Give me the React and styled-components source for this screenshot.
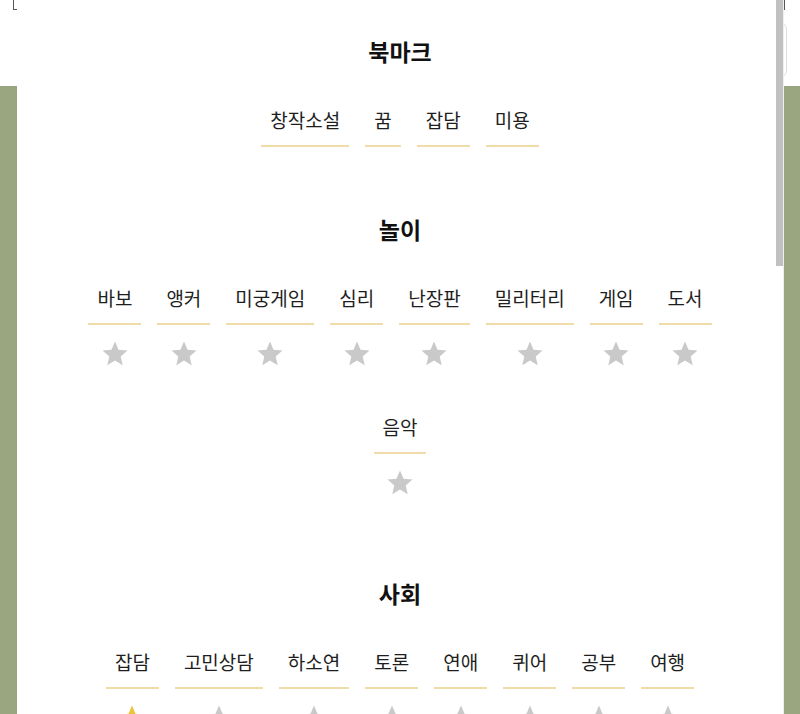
import React from 'react';
import styled, { createGlobalStyle } from 'styled-components';

const GlobalStyle = createGlobalStyle`
  html, body { margin: 0; padding: 0; }
  body {
    background: #9aa67f;
    font-family: "Noto Sans CJK KR", "Noto Sans", sans-serif;
    height: 714px;
    overflow: hidden;
  }
`;

const sections = [
  {
    title: '북마크',
    stars: false,
    tags: ['창작소설', '꿈', '잡담', '미용'],
  },
  {
    title: '놀이',
    stars: true,
    tags: ['바보', '앵커', '미궁게임', '심리', '난장판', '밀리터리', '게임', '도서', '음악'],
  },
  {
    title: '사회',
    stars: true,
    active: '잡담',
    tags: ['잡담', '고민상담', '하소연', '토론', '연애', '퀴어', '공부', '여행'],
  },
  {
    title: '창작',
    stars: true,
    tags: ['창작소설', '그림', '릴레이', '설정', '시', '음악'],
  },
];

export default function App() {
  return (
    <>
      <GlobalStyle />
      <Header>
        <TopBar />
        <SearchBox />
      </Header>
      <Modal>
        <Content>
          {sections.map((s) => (
            <Section key={s.title}>
              <Title>{s.title}</Title>
              <TagList>
                {s.tags.map((t, i) => (
                  <TagItem key={t + i}>
                    <Label>{t}</Label>
                    {s.stars && <Star $on={s.active === t} />}
                  </TagItem>
                ))}
              </TagList>
            </Section>
          ))}
        </Content>
        <ScrollTrack>
          <ScrollThumb />
        </ScrollTrack>
      </Modal>
    </>
  );
}

const Star = ({ $on }) => (
  <StarIcon viewBox="0 0 24 24" $on={$on}>
    <path d="M12 17.27L18.18 21l-1.64-7.03L22 9.24l-7.19-.61L12 2 9.19 8.63 2 9.24l5.46 4.73L5.82 21z" />
  </StarIcon>
);

const Header = styled.div`
  height: 86px;
  background: #fff;
  display: flex;
  flex-direction: column;
`;

const TopBar = styled.div`
  height: 9px;
  margin: 0 15px 0 13px;
  border: 1px solid #555;
  border-top: none;
`;

const SearchBox = styled.div`
  height: 52px;
  margin: 13px 13px 0 500px;
  border: 1px solid #ddd;
  border-radius: 6px;
`;

const Modal = styled.div`
  position: fixed;
  top: 0;
  bottom: 0;
  left: 17px;
  width: 767px;
  background: #fff;
  display: flex;
  overflow: hidden;
`;

const Content = styled.div`
  flex: 1;
  min-width: 0;
  align-self: flex-start;
  min-height: 1916px;
  box-sizing: border-box;
  padding: 36px 40px 60px 47px;
  display: flex;
  flex-direction: column;
  gap: 67px;
`;

const ScrollTrack = styled.div`
  width: 8px;
  flex-shrink: 0;
  background: #fff;
  border-right: 1px solid #eee;
  box-sizing: border-box;
`;

const ScrollThumb = styled.div`
  height: 266px;
  width: 7px;
  background: #c1c1c1;
`;

const Section = styled.section`
  display: flex;
  flex-direction: column;
  align-items: center;
  gap: 41px;
`;

const Title = styled.h2`
  margin: 0;
  font-size: 23px;
  line-height: 30px;
  font-weight: 700;
  color: #111;
`;

const TagList = styled.div`
  display: flex;
  flex-wrap: wrap;
  justify-content: center;
  column-gap: 16px;
  row-gap: 32px;
`;

const TagItem = styled.div`
  display: flex;
  flex-direction: column;
  align-items: center;
`;

const Label = styled.span`
  display: block;
  font-size: 19px;
  line-height: 26px;
  color: #1e1e1e;
  padding: 0 9px 12px;
  border-bottom: 2px solid #efdca8;
  white-space: nowrap;
`;

const StarIcon = styled.svg`
  width: 30px;
  height: 30px;
  margin-top: 14px;
  margin-bottom: 13px;
  fill: ${(p) => (p.$on ? '#e8c53a' : '#c9c9c9')};
`;
